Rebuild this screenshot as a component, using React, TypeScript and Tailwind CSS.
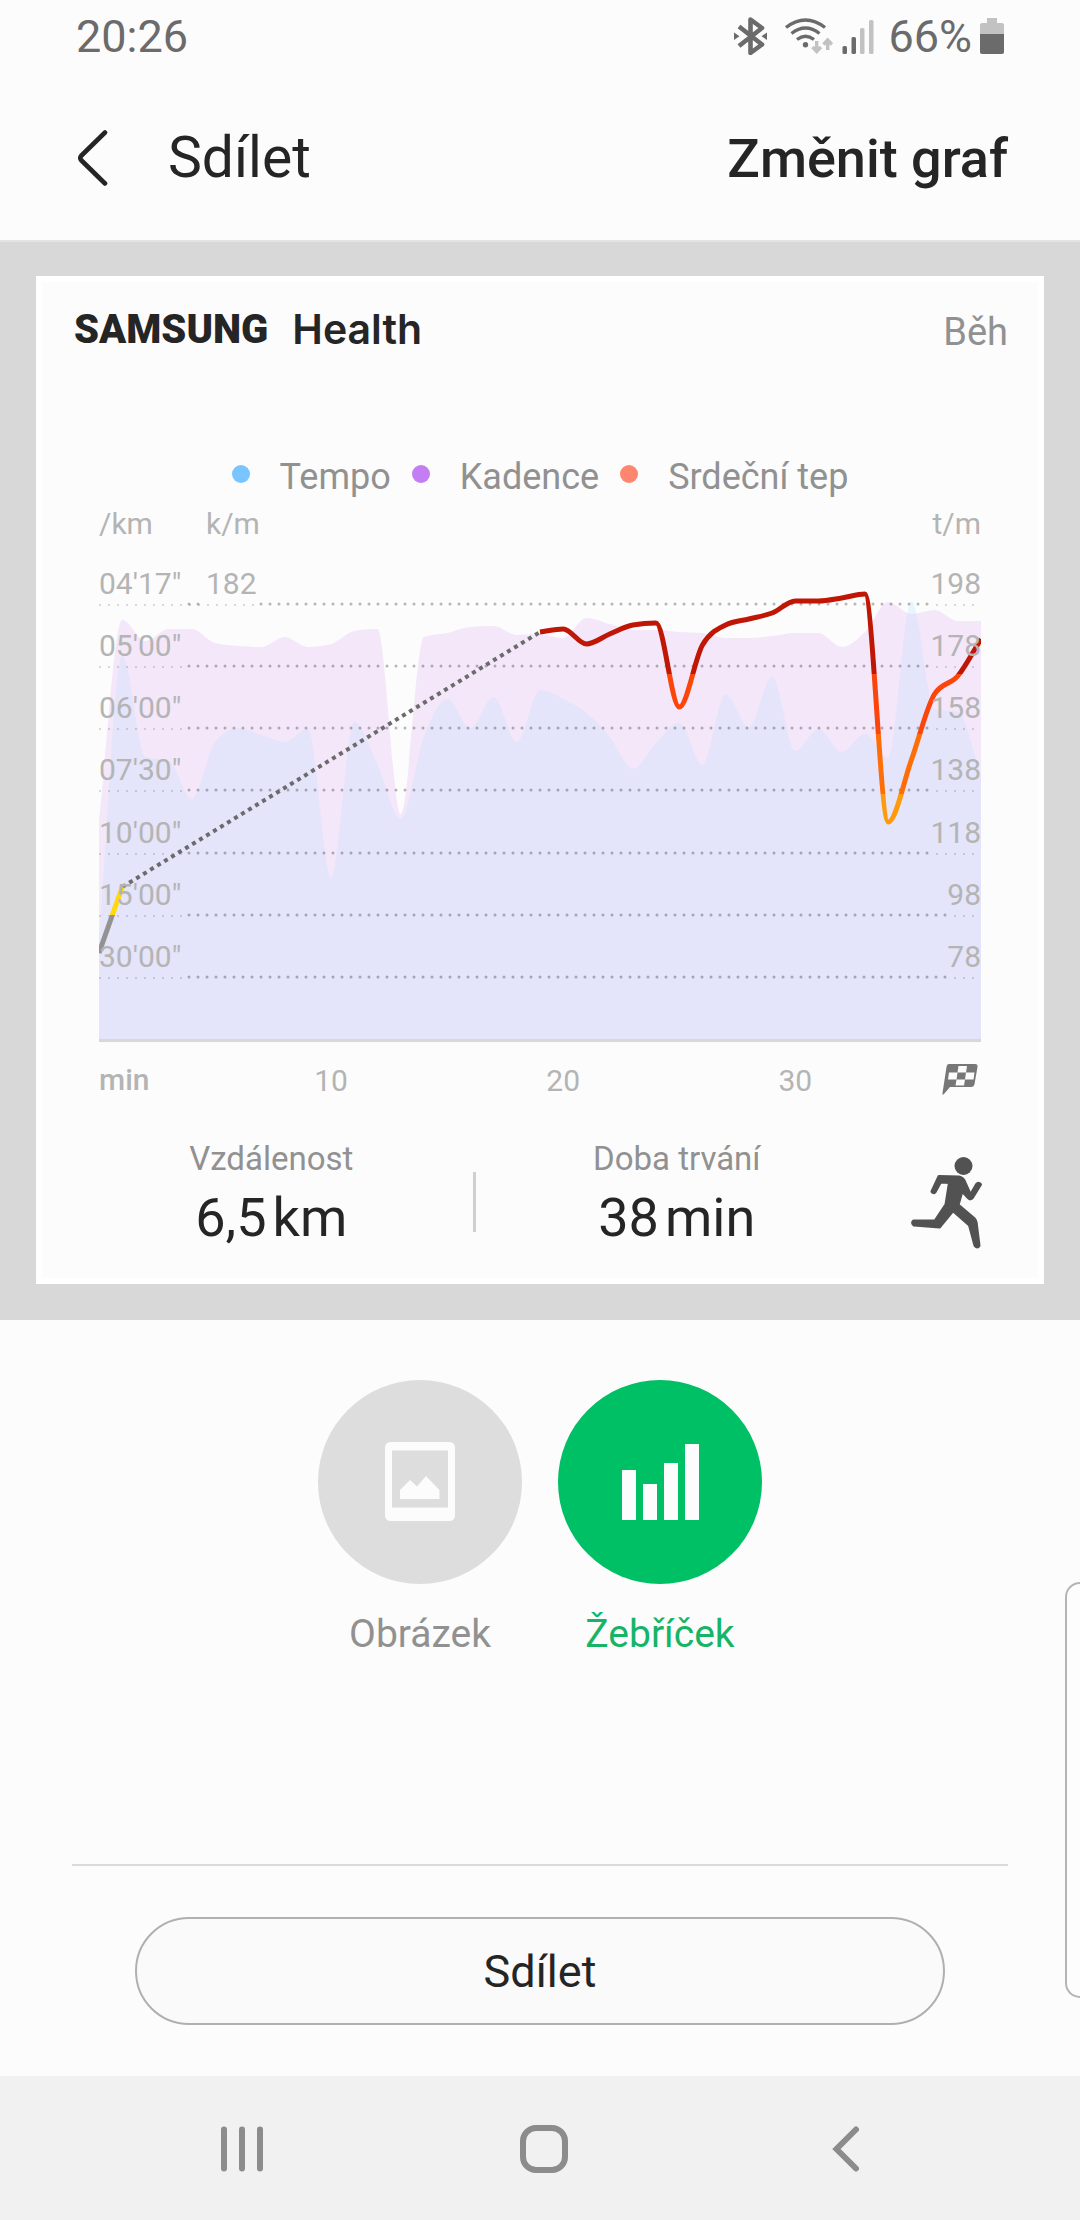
import React from "react";

type Point = [number, number];

// Plot geometry, in the units of the chart's viewBox
const WIDTH = 882;
const BASE = 539;
const MINUTES = 38;
const STEP = WIDTH / MINUTES;

// One value for each minute, measured down from the top of the chart
const cadence = [
  320, 120, 141, 129, 129, 143, 146, 147, 137, 147, 144, 131, 129, 314, 137, 133, 127, 126, 135, 134,
  138, 118, 124, 130, 130, 132, 133, 138, 138, 136, 133, 133, 147, 132, 102, 114, 110, 121, 121,
];
const pace = [
  440, 156, 257, 261, 299, 242, 228, 235, 242, 229, 378, 222, 265, 319, 237, 199, 228, 197, 242, 190,
  199, 213, 237, 269, 243, 223, 265, 195, 227, 177, 251, 229, 252, 234, 258, 101, 209, 212, 275,
];
const heartStart = [453, 387];
const heartRest = [132, 129, 144, 134, 125, 123, 207, 145, 125, 119, 113, 101, 101, 98, 94, 322, 260, 194, 176, 139];
const HEART_RESUME = 19;

const rows = [
  { y: 104, pace: "04'17\"", heart: "198" },
  { y: 166, pace: "05'00\"", heart: "178" },
  { y: 228, pace: "06'00\"", heart: "158" },
  { y: 290, pace: "07'30\"", heart: "138" },
  { y: 353, pace: "10'00\"", heart: "118" },
  { y: 415, pace: "15'00\"", heart: "98" },
  { y: 477, pace: "30'00\"", heart: "78" },
];

const legend = [
  { label: "Tempo", dot: "bg-[#7ac4ff]" },
  { label: "Kadence", dot: "bg-[#c47df2]" },
  { label: "Srdeční tep", dot: "bg-[#ff866e]" },
];

const toPoints = (values: number[], from = 0): Point[] =>
  values.map((v, i) => [(i + from) * STEP, v]);

// Monotone cubic curve, so that peaks never overshoot their values
const curve = (pts: Point[]) => {
  const n = pts.length;
  const slopes = pts.slice(1).map((p, i) => (p[1] - pts[i][1]) / (p[0] - pts[i][0]));
  const tangents = pts.map((_, i) => {
    if (i === 0) return slopes[0];
    if (i === n - 1) return slopes[n - 2];
    const a = slopes[i - 1];
    const b = slopes[i];
    if (a * b <= 0) return 0;
    return Math.sign(a) * Math.min(Math.abs(a), Math.abs(b), Math.abs(a + b) / 4) * 2;
  });
  let d = `M${pts[0][0]},${pts[0][1]}`;
  for (let i = 1; i < n; i++) {
    const h = (pts[i][0] - pts[i - 1][0]) / 3;
    d += `C${pts[i - 1][0] + h},${pts[i - 1][1] + tangents[i - 1] * h} `;
    d += `${pts[i][0] - h},${pts[i][1] - tangents[i] * h} ${pts[i][0]},${pts[i][1]}`;
  }
  return d;
};

const area = (values: number[]) => `${curve(toPoints(values))}V${BASE}H0Z`;

const StatusBar: React.FC = () => (
  <div className="flex h-[72px] items-center justify-between px-[76px] text-[45px] leading-none text-[#6b6b6b]">
    <span>20:26</span>
    <div className="flex items-center">
      <svg className="h-[38px] w-[140px]" viewBox="733 16 140 38" fill="none" aria-hidden="true">
        {/* Bluetooth */}
        <path
          d="M738 25.500l23 18-11.500 8.500V18.500L761 27l-23 18"
          stroke="#6b6b6b"
          strokeWidth="4.600"
          strokeLinejoin="round"
        />
        <path d="M733 31.500l5.500 3.700-5.500 3.700zM766 31.500l-5.500 3.700 5.500 3.700z" fill="#6b6b6b" />
        {/* Wi-Fi */}
        <g stroke="#6b6b6b" strokeWidth="3.400">
          <path d="M785 26.500q19.500-15 39 0" />
          <path d="M790.500 32.500q14-11 28 0" />
          <path d="M796 38.500q8.500-6.500 17 0" />
        </g>
        <circle cx="804.500" cy="43.800" r="2.700" fill="#6b6b6b" />
        <g stroke="#c2c2c2" strokeWidth="3.400">
          <path d="M815.700 40v10.500M811.500 46l4.200 4.500 4.200-4.500M826.700 49V39M822.500 43.500l4.200-4.500 4.200 4.500" />
        </g>
        {/* Signal */}
        <g fill="#6b6b6b">
          <rect x="841.500" y="45" width="4.500" height="8" rx="1.500" />
          <rect x="850.500" y="36" width="4.500" height="17" rx="1.500" />
        </g>
        <g fill="#c2c2c2">
          <rect x="859" y="27" width="4.500" height="26" rx="1.500" />
          <rect x="868" y="19" width="4.500" height="34" rx="1.500" />
        </g>
      </svg>
      <span className="ml-3.5">66%</span>
      <svg className="ml-2 h-9 w-6" viewBox="0 0 24 36" aria-hidden="true">
        <path d="M7 0h10v5h5q2 0 2 2v9H0V7q0-2 2-2h5z" fill="#c2c2c2" />
        <path d="M0 16h24v18q0 2-2 2H2q-2 0-2-2z" fill="#6b6b6b" />
      </svg>
    </div>
  </div>
);

const Header: React.FC = () => (
  <header className="flex h-[170px] items-center justify-between border-b-2 border-[#e4e4e4] px-[72px] pt-1 text-[#252525]">
    <div className="flex items-center">
      <button type="button" aria-label="Zpět" className="p-1.5">
        <svg className="h-14 w-[30px]" viewBox="0 0 30 56" fill="none" aria-hidden="true">
          <path d="M27 2.500L3.500 25.500q-2.500 2.500 0 5L27 53.500" stroke="#252525" strokeWidth="4.600" strokeLinecap="round" />
        </svg>
      </button>
      <h1 className="ml-[54px] text-[57px]">Sdílet</h1>
    </div>
    <button type="button" className="text-[54px] font-medium">
      Změnit graf
    </button>
  </header>
);

const Chart: React.FC = () => (
  <svg className="w-full" viewBox="0 0 882 600" fill="none" role="img" aria-label="Tempo, Kadence, Srdeční tep">
    <defs>
      <linearGradient id="zones" gradientUnits="userSpaceOnUse" x1="0" y1="0" x2="0" y2="600">
        <stop offset="0.29" stopColor="#c01606" />
        <stop offset="0.29" stopColor="#fb450a" />
        <stop offset="0.39" stopColor="#fb450a" />
        <stop offset="0.39" stopColor="#fe6e08" />
        <stop offset="0.49" stopColor="#fe6e08" />
        <stop offset="0.49" stopColor="#ff9a0a" />
        <stop offset="0.59" stopColor="#ff9a0a" />
        <stop offset="0.59" stopColor="#ffd90a" />
        <stop offset="0.692" stopColor="#ffd90a" />
        <stop offset="0.692" stopColor="#929292" />
      </linearGradient>
      <clipPath id="plot">
        <rect width={WIDTH} height={BASE} />
      </clipPath>
      <clipPath id="under-cadence">
        <path d={area(cadence)} />
      </clipPath>
    </defs>

    {/* Pace and cadence areas, with their overlap in a colour of its own */}
    <path d={area(pace)} fill="#e7f5fd" />
    <path d={area(cadence)} fill="#f3e7f9" />
    <path d={area(pace)} fill="#e4e4fa" clipPath="url(#under-cadence)" />

    {/* Grid, thinner where a label stands on it */}
    <g stroke="#000" strokeOpacity="0.28">
      {rows.map((row, i) => {
        const right = row.heart.length === 3 ? 837 : 855;
        const left = i === 0 ? 162 : 90;
        return (
          <g key={row.y}>
            <path d={`M${left} ${row.y}H${right}`} strokeWidth="3" strokeLinecap="round" strokeDasharray="0 9" />
            <path d={`M0 ${row.y + 1}H${left - 5}M${right} ${row.y + 1}H876`} strokeWidth="1" strokeDasharray="2 7" />
          </g>
        );
      })}
      <path d="M90 104H100" strokeWidth="3" strokeLinecap="round" strokeDasharray="0 9" />
    </g>

    <path
      d={`M${STEP} ${heartStart[1]}L${STEP * HEART_RESUME} ${heartRest[0]}`}
      stroke="#6b6b6b"
      strokeWidth="4"
      strokeDasharray="4 4.200"
    />
    <g clipPath="url(#plot)" stroke="url(#zones)" strokeWidth="5" strokeLinejoin="round">
      <path d={curve(toPoints(heartStart))} />
      <path d={curve(toPoints(heartRest, HEART_RESUME))} />
    </g>

    <rect y={BASE} width={WIDTH} height="3" fill="#d8d8d8" />

    <g fill="#b4b4b4" className="text-[30px]">
      <text x="0" y="34">/km</text>
      <text x="107" y="34">k/m</text>
      <text x={WIDTH} y="34" textAnchor="end">t/m</text>
      <text x="107" y="94">182</text>
      {rows.map((row) => (
        <React.Fragment key={row.y}>
          <text x="0" y={row.y - 10}>{row.pace}</text>
          <text x={WIDTH} y={row.y - 10} textAnchor="end">{row.heart}</text>
        </React.Fragment>
      ))}
      <text x="0" y="590" className="font-medium">min</text>
      {[10, 20, 30].map((m) => (
        <text key={m} x={m * STEP} y="591" textAnchor="middle">{m}</text>
      ))}
    </g>

    {/* Finish flag */}
    <path
      d="M850 564h26q3 0 2.500 3l-3 17q-.5 3-3.500 3h-21l-6 7q-2 1.500-1.500-1l4-26q.5-3 2.500-3z"
      fill="#777"
    />
    <path
      d="M859.500 566h8.500l-1 6.500h-8.500zM850 572.500h8.500l-1 7h-8.500zM867 572.500h8.500l-1 7h-8.500zM857.500 579.500h8.500l-1 6h-8.500z"
      fill="#fcfcfc"
    />
  </svg>
);

const Stat: React.FC<{ label: string; value: string; unit: string }> = ({ label, value, unit }) => (
  <div className="flex flex-1 flex-col items-center gap-2">
    <span className="text-[33px] leading-[39px] text-[#919191]">{label}</span>
    <span className="flex gap-1.5 text-[54px] leading-[64px] text-[#252525]">
      <span>{value}</span>
      <span>{unit}</span>
    </span>
  </div>
);

const Runner: React.FC = () => (
  <svg className="h-[94px] w-[72px]" viewBox="910 1157 72 94" fill="#525252" aria-hidden="true">
    <circle cx="963.500" cy="1167" r="9" />
    <path
      d="M939 1177.500L959 1178q4 .5 6 5.500l5.500 12.500L976.500 1185.500q2-2.500 4 0L972.500 1198.500q-2 2.500-4 .5L962 1192L958 1206L974.500 1220q1.500 1.500 1.700 4L979 1246.500q-1.500 3-4 0L969.500 1226L953 1211.500L939.500 1228L914 1226q-2.500-2-.5-4L935 1222L946 1205.500L949.500 1183.500L940.500 1183L935 1193q-2 1.500-3-.5z"
      stroke="#525252"
      strokeWidth="3"
      strokeLinejoin="round"
    />
  </svg>
);

const ShareCard: React.FC = () => (
  <section className="bg-[#d8d8d8] px-9 pt-[34px] pb-9">
    <article className="border-[6px] border-white bg-[#fcfcfc] pt-5 pb-7">
      <div className="flex h-[60px] items-center justify-between pr-[30px] pl-8">
        <div className="flex items-center gap-6 pb-1 text-[#252525]">
          <span className="text-[40px] font-black">SAMSUNG</span>
          <span className="font-['Inter','sans-serif'] text-[41px] font-semibold">Health</span>
        </div>
        <span className="text-[38px] text-[#919191]">Běh</span>
      </div>

      <ul className="mt-[94px] flex justify-center gap-[21px] text-[36px] leading-[42px] text-[#919191]">
        {legend.map((item) => (
          <li key={item.label} className="flex items-center gap-[30px]">
            <span className={`mb-1.5 size-[18px] rounded-full ${item.dot}`} />
            {item.label}
          </li>
        ))}
      </ul>

      <div className="px-[57px] pt-0.5">
        <Chart />
      </div>

      <div className="mt-[39px] flex items-center pr-14 pl-7">
        <Stat label="Vzdálenost" value="6,5" unit="km" />
        <div className="mt-3.5 h-[60px] w-[3px] bg-[#d0d0d0]" />
        <Stat label="Doba trvání" value="38" unit="min" />
        <div className="pt-4 pl-8">
          <Runner />
        </div>
      </div>
    </article>
  </section>
);

const ModePicker: React.FC = () => (
  <section className="flex justify-center gap-9 pt-[60px] text-[39px] leading-[44px]">
    <button type="button" className="flex flex-col items-center gap-7 text-[#919191]">
      <span className="flex size-[204px] items-center justify-center rounded-full bg-[#ddd]">
        <svg className="h-20 w-[70px]" viewBox="0 0 70 80" aria-hidden="true">
          <path
            fillRule="evenodd"
            d="M6 0h58q6 0 6 6v67q0 6-6 6H6q-6 0-6-6V6q0-6 6-6zM7 8.500v57h56v-57z"
            fill="#fcfcfc"
          />
          <path d="M15 57V48L25 38l7 6.500L41 34l13.500 14v9z" fill="#fcfcfc" />
        </svg>
      </span>
      Obrázek
    </button>
    <button type="button" aria-pressed="true" className="flex flex-col items-center gap-7 text-[#15b565]">
      <span className="flex size-[204px] items-center justify-center rounded-full bg-[#00c065]">
        <svg className="h-[76px] w-[78px]" viewBox="0 0 78 76" fill="#fcfcfc" aria-hidden="true">
          <rect x="1" y="26" width="14" height="50" />
          <rect x="22" y="40" width="14" height="36" />
          <rect x="43" y="19" width="14" height="57" />
          <rect x="64" y="0" width="14" height="76" />
        </svg>
      </span>
      Žebříček
    </button>
  </section>
);

const NavBar: React.FC = () => (
  <nav className="flex h-36 items-center justify-center bg-[#f1f1f1] pt-0.5 pl-2">
    <button type="button" aria-label="Poslední" className="flex w-[302px] justify-center">
      <svg className="size-12" viewBox="0 0 48 48" fill="none" stroke="#8c8c8c" strokeWidth="6" strokeLinecap="round">
        <path d="M6 4.500v39M24 4.500v39M42 4.500v39" />
      </svg>
    </button>
    <button type="button" aria-label="Domů" className="flex w-[302px] justify-center">
      <svg className="size-12" viewBox="0 0 48 48" fill="none" stroke="#8c8c8c" strokeWidth="6">
        <rect x="3" y="3" width="42" height="42" rx="13" />
      </svg>
    </button>
    <button type="button" aria-label="Zpět" className="flex w-[302px] justify-center">
      <svg className="size-12" viewBox="0 0 48 48" fill="none" stroke="#8c8c8c" strokeWidth="6" strokeLinecap="round">
        <path d="M34 4.500L14.500 24 34 43.500" />
      </svg>
    </button>
  </nav>
);

const App: React.FC = () => {
  return (
    <div className="relative flex min-h-screen flex-col overflow-hidden bg-[#fcfcfc] font-[Roboto,sans-serif]">
      <StatusBar />
      <Header />
      <main className="flex flex-1 flex-col">
        <ShareCard />
        <ModePicker />
        <div className="mx-[72px] mt-auto border-t-2 border-[#dadada] px-[63px] py-[51px]">
          <button
            type="button"
            className="h-[108px] w-full rounded-full border-2 border-[#b0b0b0] bg-[#fafafa] pt-0.5 text-[45px] text-[#252525]"
          >
            Sdílet
          </button>
        </div>
      </main>
      <NavBar />

      {/* Edge panel handle */}
      <div className="absolute right-0 bottom-[222px] h-[416px] w-[15px] rounded-l-[18px] border-2 border-r-0 border-[#b4b4b4] bg-[#fdfdfd]" />
    </div>
  );
};

export default App;
